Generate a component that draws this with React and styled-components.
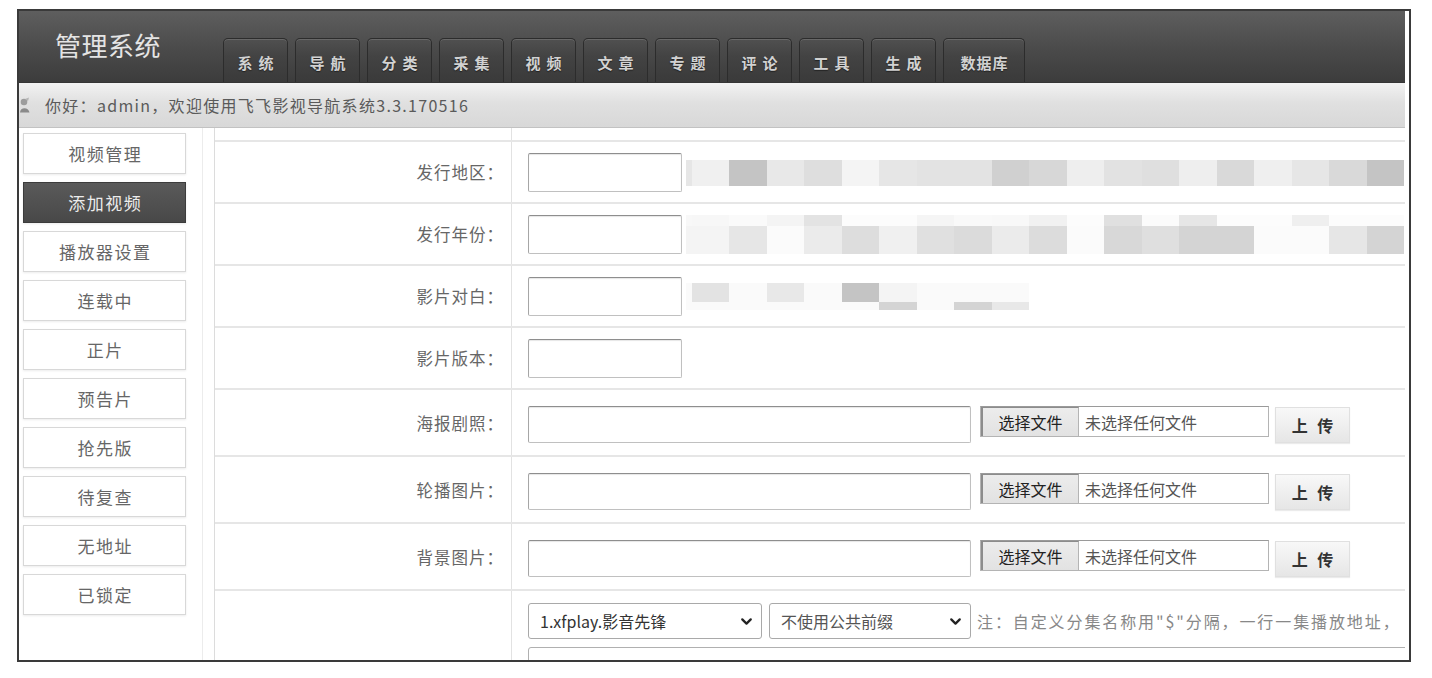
import React from "react";
import styled, { createGlobalStyle } from "styled-components";
import { ChevronDown } from "lucide-react";

const GlobalStyle = createGlobalStyle`
  html, body {
    margin: 0;
    padding: 0;
    background: #fff;
  }
  body {
    font-family: "Noto Sans CJK SC", "Noto Sans", sans-serif;
  }
  * {
    box-sizing: border-box;
  }
`;

const tabs = [
  { name: "系统" },
  { name: "导航" },
  { name: "分类" },
  { name: "采集" },
  { name: "视频" },
  { name: "文章" },
  { name: "专题" },
  { name: "评论" },
  { name: "工具" },
  { name: "生成" },
  { name: "数据库", wide: true },
];

const menu = [
  "视频管理",
  "添加视频",
  "播放器设置",
  "连载中",
  "正片",
  "预告片",
  "抢先版",
  "待复查",
  "无地址",
  "已锁定",
];

// blurred (pixelated) text next to the first inputs
const mosaics = {
  area: [
    {
      h: 26,
      lead: "#e6e6e6",
      cells: ["#f0f0f0", "#c4c4c4", "#e8e8e8", "#dedede", "#f4f4f4", "#e6e6e6", "#e3e3e3", "#e3e3e3", "#d0d0d0", "#d7d7d7", "#eeeeee", "#e2e2e2", "#dfdfdf", "#eeeeee", "#d9d9d9", "#efefef", "#e6e6e6", "#d9d9d9", "#c4c4c4"],
    },
  ],
  year: [
    {
      h: 11,
      lead: "#f8f8f8",
      cells: ["#f7f7f7", "#fafafa", "#f4f4f4", "#e3e3e3", "#fcfcfc", "#fcfcfc", "#f5f5f5", "#f9f9f9", "#f8f8f8", "#f1f1f1", "#fcfcfc", "#e0e0e0", "#fbfbfb", "#e6e6e6", "#fcfcfc", "#fcfcfc", "#efefef", "#fcfcfc", "#fcfcfc"],
    },
    {
      h: 28,
      lead: "#f4f4f4",
      cells: ["#f4f4f4", "#e6e6e6", "#fbfbfb", "#ebebeb", "#dddddd", "#f0f0f0", "#e0e0e0", "#dbdbdb", "#ebebeb", "#dcdcdc", "#fbfbfb", "#d8d8d8", "#dfdfdf", "#d4d4d4", "#d4d4d4", "#fbfbfb", "#fbfbfb", "#e6e6e6", "#d4d4d4"],
    },
  ],
  dialog: [
    {
      h: 19,
      lead: "#fafafa",
      cells: ["#e3e3e3", "#fafafa", "#e8e8e8", "#fafafa", "#c4c4c4", "#f4f4f4", "#fafafa", "#fafafa", "#fafafa"],
    },
    {
      h: 8,
      lead: "#fafafa",
      cells: ["#fafafa", "#fafafa", "#fafafa", "#fafafa", "#fafafa", "#d4d4d4", "#fafafa", "#d4d4d4", "#e8e8e8"],
    },
  ],
};

const App = () => {
  return (
    <>
      <GlobalStyle />
      <Frame>
        <Header>
          <Title>管理系统</Title>
          <Tabs>
            {tabs.map((t) => (
              <Tab key={t.name} $wide={t.wide}>
                {t.name}
              </Tab>
            ))}
          </Tabs>
        </Header>

        <WelcomeBar>
          <UserIcon width="10" height="16" viewBox="0 0 10 16">
            <circle cx="4" cy="5" r="3.3" fill="#9c9c9c" />
            <path d="M0 15.5 C0 10 8.5 9.5 9.5 15.5 Z" fill="#8a8a8a" />
            <path d="M5 2 L9 0.5 L8 4 Z" fill="#b5b5b5" />
          </UserIcon>
          你好：admin，欢迎使用飞飞影视导航系统3.3.170516
        </WelcomeBar>

        <Body>
          <Sidebar>
            {menu.map((m) => (
              <SideButton key={m} $active={m === "添加视频"}>
                {m}
              </SideButton>
            ))}
          </Sidebar>

          <Main>
            <Row>
              <Label />
              <Value $top={12} $bottom={0} />
            </Row>

            <Row>
              <Label>发行地区：</Label>
              <Value>
                <ShortInput />
                <Mosaic rows={mosaics.area} />
              </Value>
            </Row>
            <Row>
              <Label>发行年份：</Label>
              <Value>
                <ShortInput />
                <Mosaic rows={mosaics.year} />
              </Value>
            </Row>
            <Row>
              <Label>影片对白：</Label>
              <Value>
                <ShortInput />
                <Mosaic rows={mosaics.dialog} />
              </Value>
            </Row>
            <Row>
              <Label>影片版本：</Label>
              <Value>
                <ShortInput />
              </Value>
            </Row>

            {["海报剧照：", "轮播图片：", "背景图片："].map((l) => (
              <Row key={l}>
                <Label>{l}</Label>
                <Value $top={16} $bottom={12} $start>
                  <LongInput />
                  <FileBox>
                    <ChooseButton>选择文件</ChooseButton>
                    <NoFile>未选择任何文件</NoFile>
                  </FileBox>
                  <UploadButton>上 传</UploadButton>
                </Value>
              </Row>
            ))}

            <Row $last>
              <Label />
              <Value $top={12} $bottom={0} $column>
                <SelectLine>
                  <SelectWrap $w={234}>
                    <Select defaultValue="xfplay">
                      <option value="xfplay">1.xfplay.影音先锋</option>
                    </Select>
                    <SelectArrow size={17} strokeWidth={3.2} />
                  </SelectWrap>
                  <SelectWrap $w={202}>
                    <Select defaultValue="none" $muted>
                      <option value="none">不使用公共前缀</option>
                    </Select>
                    <SelectArrow size={17} strokeWidth={3.2} />
                  </SelectWrap>
                  <Note>注：自定义分集名称用"$"分隔，一行一集播放地址，</Note>
                </SelectLine>
                <UrlArea />
              </Value>
            </Row>
          </Main>
        </Body>
      </Frame>
    </>
  );
};

const Mosaic = ({ rows }) => (
  <MosaicBox>
    {rows.map((r, i) => (
      <MosaicRow key={i} $h={r.h}>
        <MosaicCell $c={r.lead} $w={5.5} />
        {r.cells.map((c, j) => (
          <MosaicCell key={j} $c={c} />
        ))}
      </MosaicRow>
    ))}
  </MosaicBox>
);

const Frame = styled.div`
  margin: 9px 0 0 17px;
  width: 1394px;
  height: 653px;
  border: 2px solid #3a3a3a;
  padding-right: 4px;
  overflow: hidden;
  background: #fff;
  display: flex;
  flex-direction: column;
`;

const Header = styled.div`
  height: 72px;
  flex-shrink: 0;
  display: flex;
  align-items: flex-end;
  padding-left: 36px;
  background: linear-gradient(#5e5e5e, #4a4a4a 55%, #3c3c3c);
  border-bottom: 1px solid #353535;
`;

const Title = styled.div`
  align-self: flex-start;
  margin-top: 15px;
  width: 168px;
  font-size: 26px;
  line-height: 38px;
  color: #e4e4e4;
  letter-spacing: 0.5px;
`;

const Tabs = styled.div`
  display: flex;
  gap: 7px;
`;

const Tab = styled.div`
  width: ${(p) => (p.$wide ? "82px" : "65px")};
  height: 44px;
  display: flex;
  align-items: center;
  justify-content: center;
  padding-top: 4px;
  padding-left: ${(p) => (p.$wide ? "1px" : "6px")};
  border: 1px solid #2c2c2c;
  border-bottom: none;
  border-radius: 5px 5px 0 0;
  background: linear-gradient(#505050, #434343 40%, #3a3a3a);
  box-shadow: inset 0 1px 0 rgba(255, 255, 255, 0.14);
  color: #d2d2d2;
  font-size: 15px;
  font-weight: bold;
  letter-spacing: ${(p) => (p.$wide ? "1px" : "6px")};
  text-shadow: 0 1px 1px #222;
`;

const WelcomeBar = styled.div`
  height: 45px;
  flex-shrink: 0;
  display: flex;
  align-items: center;
  padding-left: 1px;
  background: linear-gradient(#f2f2f2, #e0e0e0 45%, #d8d8d8);
  border-bottom: 1px solid #c2c2c2;
  color: #5a5a5a;
  font-size: 16px;
  letter-spacing: 1.3px;
  white-space: nowrap;
`;

const UserIcon = styled.svg`
  margin-right: 15px;
  flex-shrink: 0;
`;

const Body = styled.div`
  flex: 1;
  display: flex;
  min-height: 0;
`;

const Sidebar = styled.div`
  width: 184px;
  flex-shrink: 0;
  border-right: 1px solid #ececec;
  padding: 5px 0 0 4px;
  display: flex;
  flex-direction: column;
  gap: 8px;
`;

const SideButton = styled.div`
  width: 163px;
  height: 41px;
  flex-shrink: 0;
  display: flex;
  align-items: center;
  justify-content: center;
  padding-left: 1.5px;
  border: 1px solid ${(p) => (p.$active ? "#3c3c3c" : "#d8d8d8")};
  background: ${(p) => (p.$active ? "linear-gradient(#5a5a5a, #484848)" : "#fff")};
  box-shadow: 0 1px 2px rgba(0, 0, 0, 0.08);
  color: ${(p) => (p.$active ? "#ececec" : "#666")};
  font-size: 17px;
  letter-spacing: 1.5px;
`;

const Main = styled.div`
  flex: 1;
  min-width: 0;
  margin-left: 11px;
  border-left: 1px solid #dcdcdc;
  display: flex;
  flex-direction: column;
`;

const Row = styled.div`
  display: grid;
  grid-template-columns: 297px 1fr;
  border-bottom: ${(p) => (p.$last ? "none" : "2px solid #e6e6e6")};
  flex-shrink: 0;
`;

const Label = styled.div`
  display: flex;
  align-items: center;
  justify-content: flex-end;
  padding-right: 7px;
  border-right: 1px solid #e2e2e2;
  color: #666;
  font-size: 16.5px;
  letter-spacing: 1px;
`;

const Value = styled.div`
  display: flex;
  flex-direction: ${(p) => (p.$column ? "column" : "row")};
  align-items: ${(p) => (p.$start || p.$column ? "flex-start" : "center")};
  padding: ${(p) => (p.$top ?? 11)}px 0 ${(p) => (p.$bottom ?? 10)}px 16px;
  overflow: hidden;
  min-width: 0;
`;

const TextField = styled.input`
  height: 39px;
  flex-shrink: 0;
  border: 1px solid #c0c0c0;
  border-top-color: #8e8e8e;
  border-left-color: #a6a6a6;
  border-radius: 2px;
  box-shadow: inset 0 1px 1px rgba(0, 0, 0, 0.1);
  background: #fff;
  outline: none;
`;

const ShortInput = styled(TextField)`
  width: 154px;
`;

const LongInput = styled(TextField)`
  width: 443px;
  height: 37px;
`;

const MosaicBox = styled.div`
  margin-left: 4px;
  display: flex;
  flex-direction: column;
  flex-shrink: 0;
`;

const MosaicRow = styled.div`
  display: flex;
  height: ${(p) => p.$h}px;
`;

const MosaicCell = styled.div`
  width: ${(p) => p.$w ?? 37.5}px;
  flex-shrink: 0;
  background: ${(p) => p.$c};
`;

const FileBox = styled.div`
  margin-left: 9px;
  width: 289px;
  height: 31px;
  flex-shrink: 0;
  display: flex;
  align-items: stretch;
  border: 1px solid #b4b4b4;
  border-top-color: #9a9a9a;
  background: #fff;
`;

const ChooseButton = styled.div`
  width: 98px;
  display: flex;
  align-items: center;
  justify-content: center;
  background: linear-gradient(#ececec, #e2e2e2);
  border-left: 2px solid #8c8c8c;
  border-top: 1px solid #8c8c8c;
  border-right: 1px solid #b4b4b4;
  color: #222;
  font-size: 16px;
`;

const NoFile = styled.div`
  display: flex;
  align-items: center;
  padding-left: 6px;
  color: #555;
  font-size: 16px;
`;

const UploadButton = styled.div`
  margin: 1px 0 0 6px;
  width: 75px;
  height: 36px;
  flex-shrink: 0;
  display: flex;
  align-items: center;
  justify-content: center;
  padding-left: 3px;
  border: 1px solid #e0e0e0;
  background: linear-gradient(#f8f8f8, #e6e6e6);
  box-shadow: 0 1px 1px rgba(0, 0, 0, 0.08);
  color: #333;
  font-size: 16px;
  font-weight: bold;
  letter-spacing: 3px;
  white-space: pre;
`;

const SelectLine = styled.div`
  display: flex;
  align-items: center;
  gap: 7px;
  white-space: nowrap;
`;

const SelectWrap = styled.div`
  position: relative;
  width: ${(p) => p.$w}px;
  height: 36px;
  flex-shrink: 0;
`;

const Select = styled.select`
  appearance: none;
  width: 100%;
  height: 100%;
  padding-left: 11px;
  border: 1px solid #a9a9a9;
  border-radius: 3px;
  background: #fff;
  color: ${(p) => (p.$muted ? "#555" : "#333")};
  font-family: "Noto Sans CJK SC", "Noto Sans", sans-serif;
  font-size: 16px;
  outline: none;
`;

const SelectArrow = styled(ChevronDown)`
  position: absolute;
  right: 7px;
  top: 10px;
  color: #222;
  pointer-events: none;
`;

const Note = styled.div`
  margin-left: -1px;
  color: #888;
  font-size: 16px;
  letter-spacing: 1.9px;
`;

const UrlArea = styled.div`
  margin-top: 8px;
  width: 1000px;
  height: 60px;
  border: 1px solid #b0b0b0;
  border-radius: 3px;
  background: #fff;
`;

export default App;
